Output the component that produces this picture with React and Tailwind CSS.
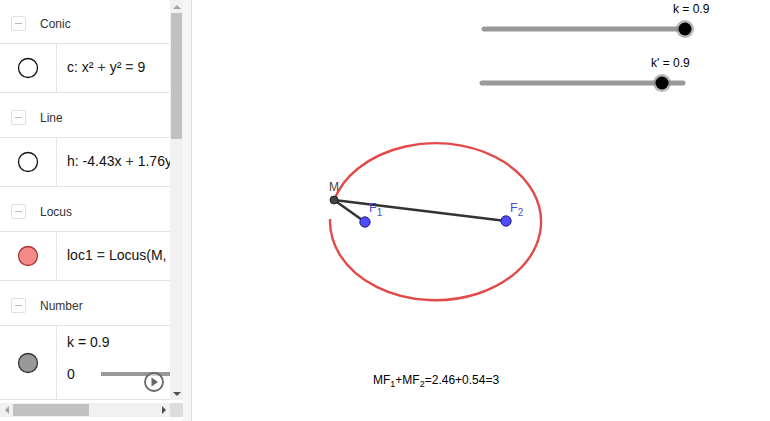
import React from 'react'

function MinusBox() {
    return (
        <div className="w-[15px] h-[15px] border border-[#e0e0e0] rounded-[2px] bg-white flex items-center justify-center">
            <div className="w-[7px] h-[1px] bg-[#bbb]" />
        </div>
    )
}

function Header({ label }) {
    return (
        <div className="h-[45px] pt-[5px] flex items-center border-b border-[#e4e4e4] shrink-0">
            <div className="pl-[11px] pr-[14px]">
                <MinusBox />
            </div>
            <span className="text-[12px] text-[#333]">{label}</span>
        </div>
    )
}

function Item({ dot, children, tall }) {
    return (
        <div className={`${tall ? 'h-[74px]' : 'h-[49px]'} flex border-b border-[#e4e4e4] shrink-0`}>
            <div className="w-[57px] shrink-0 border-r border-[#e4e4e4] flex items-center justify-center">
                {dot}
            </div>
            <div className="flex-1 relative whitespace-nowrap overflow-hidden text-[14px] text-[#111]">
                {children}
            </div>
        </div>
    )
}

function Dot({ fill = 'white', stroke = '#111' }) {
    return (
        <svg width="22" height="22" viewBox="0 0 22 22">
            <circle cx="11" cy="11" r="9.5" fill={fill} stroke={stroke} strokeWidth="1.3" />
        </svg>
    )
}

function Op({ children }) {
    return <span className="mx-[4px] text-[#333]">{children}</span>
}

function AlgebraView() {
    return (
        <div className="w-[183px] shrink-0 flex flex-col h-[417px]" style={{ fontFamily: '"Liberation Sans", Arial, sans-serif' }}>
            <div className="flex flex-1 min-h-0">
                <div className="w-[170px] flex flex-col overflow-hidden">
                    <div className="-mt-[1px] flex flex-col">
                        <Header label="Conic" />
                        <Item dot={<Dot />}>
                            <div className="h-full flex items-center pl-[10px] pb-[1px]">c: x²<Op>+</Op>y²<Op>=</Op>9</div>
                        </Item>
                        <Header label="Line" />
                        <Item dot={<Dot />}>
                            <div className="h-full flex items-center pl-[10px] pb-[1px]">h: -4.43x<Op>+</Op>1.76y<Op>=</Op>9</div>
                        </Item>
                        <Header label="Locus" />
                        <Item dot={<Dot fill="#f58a8a" stroke="#a33" />}>
                            <div className="h-full flex items-center pl-[10px] pb-[1px]">loc1<Op>=</Op>Locus(M, F)</div>
                        </Item>
                        <Header label="Number" />
                        <Item tall dot={<Dot fill="#999" stroke="#333" />}>
                            <div className="pl-[10px] pt-[6px] leading-[20px]">k = 0.9</div>
                            <div className="pl-[10px] pt-[12px] flex items-center leading-[20px]">
                                <span>0</span>
                                <div className="ml-[26px] h-[4px] w-[80px] bg-[#999]" />
                            </div>
                            <svg className="absolute left-[86px] top-[45px]" width="22" height="22" viewBox="0 0 22 22">
                                <circle cx="11" cy="11" r="9" fill="white" fillOpacity="0.6" stroke="#666" strokeWidth="1.8" />
                                <path d="M8.5 6.5 L15 11 L8.5 15.5 Z" fill="#666" />
                            </svg>
                        </Item>
                    </div>
                </div>
                <div className="w-[13px] bg-[#f1f1f1] flex flex-col items-center">
                    <div className="h-[13px] flex items-center justify-center">
                        <div className="w-0 h-0 border-l-[4px] border-r-[4px] border-b-[4px] border-l-transparent border-r-transparent border-b-[#a3a3a3]" />
                    </div>
                    <div className="w-[11px] h-[126px] bg-[#c1c1c1]" />
                    <div className="flex-1" />
                    <div className="h-[13px] flex items-center justify-center">
                        <div className="w-0 h-0 border-l-[4px] border-r-[4px] border-t-[4px] border-l-transparent border-r-transparent border-t-[#505050]" />
                    </div>
                </div>
            </div>
            <div className="h-[14px] flex shrink-0 mt-[3px]">
                <div className="w-[170px] bg-[#f1f1f1] flex items-center">
                    <div className="w-[13px] flex items-center justify-center">
                        <div className="w-0 h-0 border-t-[4px] border-b-[4px] border-r-[4px] border-t-transparent border-b-transparent border-r-[#a3a3a3]" />
                    </div>
                    <div className="w-[76px] h-[12px] bg-[#c1c1c1]" />
                    <div className="flex-1" />
                    <div className="w-[13px] flex items-center justify-center">
                        <div className="w-0 h-0 border-t-[4px] border-b-[4px] border-l-[4px] border-t-transparent border-b-transparent border-l-[#505050]" />
                    </div>
                </div>
                <div className="w-[13px] bg-[#dcdcdc]" />
            </div>
        </div>
    )
}

function Slider({ x1, x2, y, knob, label, lx }) {
    return (
        <g>
            <line x1={x1} y1={y} x2={x2} y2={y} stroke="#9a9a9a" strokeWidth="5" strokeLinecap="round" />
            <circle cx={knob} cy={y} r="9" fill="#888" fillOpacity="0.6" />
            <circle cx={knob} cy={y} r="6.5" fill="#000" />
            <text x={lx} y={y - 16} fontSize="12" fill="#000">{label}</text>
        </g>
    )
}

function GraphicsView() {
    return (
        <div className="flex-1 h-[421px] bg-white">
            <svg width="578" height="421" viewBox="192 0 578 421" style={{ fontFamily: '"Liberation Sans", Arial, sans-serif' }}>
                <Slider x1={484} x2={685} y={29} knob={685} label="k = 0.9" lx={673} />
                <Slider x1={482} x2={683} y={83} knob={662} label="k' = 0.9" lx={651} />

                <path d="M 334 200.4 A 105.5 78.5 0 1 1 330.1 219" fill="none" stroke="#e34a4a" strokeWidth="2.4" />

                <line x1="334" y1="200" x2="365" y2="222" stroke="#333" strokeWidth="2.5" />
                <line x1="334" y1="200" x2="506" y2="221" stroke="#333" strokeWidth="2.5" />

                <circle cx="334" cy="200" r="4" fill="#444" stroke="#111" strokeWidth="0.8" />
                <circle cx="365" cy="222" r="5.2" fill="#4d4dff" stroke="#1a1a66" strokeWidth="0.9" />
                <circle cx="506" cy="221" r="5.2" fill="#4d4dff" stroke="#1a1a66" strokeWidth="0.9" />

                <text x="329" y="191" fontSize="12" fill="#444">M</text>
                <text x="369" y="212" fontSize="12.5" fill="#4d4dcc">F<tspan fontSize="10" dy="4">1</tspan></text>
                <text x="510" y="212" fontSize="12.5" fill="#4d4dcc">F<tspan fontSize="10" dy="4">2</tspan></text>

                <text x="373" y="384" fontSize="12" fill="#000">
                    MF<tspan fontSize="9" dy="3">1</tspan><tspan dy="-3">+MF</tspan><tspan fontSize="9" dy="3">2</tspan><tspan dy="-3">=2.46+0.54=3</tspan>
                </text>
            </svg>
        </div>
    )
}

export default function App() {
    return (
        <div className="w-[770px] h-[421px] flex bg-white overflow-hidden">
            <AlgebraView />
            <div className="w-[9px] shrink-0 bg-[#f7f7f7] border-r border-[#dcdcdc]" />
            <GraphicsView />
        </div>
    )
}
